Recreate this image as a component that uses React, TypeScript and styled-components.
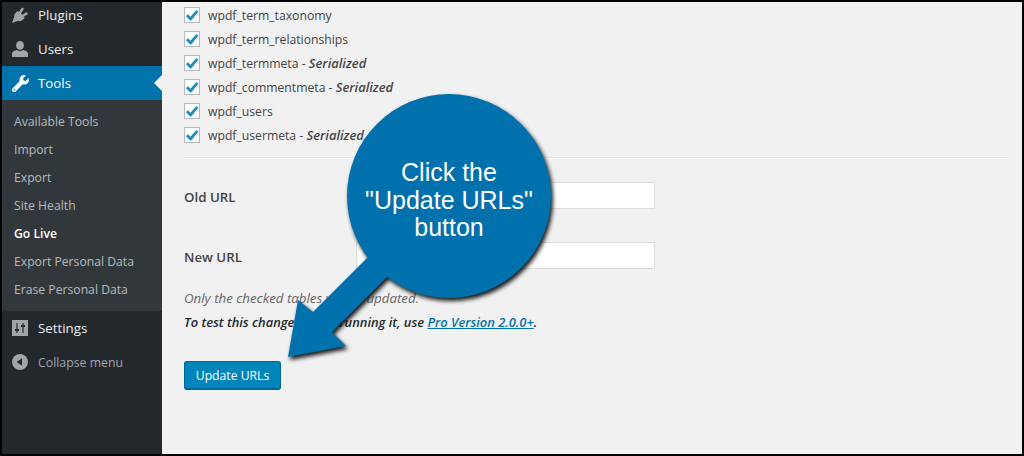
import React from "react";
import styled, { createGlobalStyle } from "styled-components";
import { FaWrench } from "react-icons/fa";

const GlobalStyle = createGlobalStyle`
  html, body {
    margin: 0;
    padding: 0;
    background: #000;
  }
  * {
    box-sizing: border-box;
  }
`;

const menuItems = ["Available Tools", "Import", "Export", "Site Health", "Go Live", "Export Personal Data", "Erase Personal Data"];

const tables = [
  { name: "wpdf_term_taxonomy", serialized: false },
  { name: "wpdf_term_relationships", serialized: false },
  { name: "wpdf_termmeta", serialized: true },
  { name: "wpdf_commentmeta", serialized: true },
  { name: "wpdf_users", serialized: false },
  { name: "wpdf_usermeta", serialized: true },
];

const PlugIcon = () => (
  <svg width="18" height="18" viewBox="0 0 18 18" fill="currentColor">
    <path d="M1 17 L3.2 11 C3 9.4 3.6 8 4.8 6.8 L6.6 5 L8 6 L10.8 1.4 L13 2.8 L10 7.6 L11.4 8.8 L15.6 6 L17 8 L12.6 10.8 L13.8 12 L11.2 14.2 C10 15.2 8.6 15.4 7.2 14.8 Z" />
  </svg>
);

const UserIcon = () => (
  <svg width="16" height="16" viewBox="0 0 16 16" fill="currentColor">
    <ellipse cx="8" cy="4.4" rx="3.9" ry="4.4" />
    <path d="M0 16 V12.4 C0 10.6 2.4 9.6 5 9 C6.8 10.2 9.2 10.2 11 9 C13.6 9.6 16 10.6 16 12.4 V16 Z" />
  </svg>
);

const SettingsIcon = () => (
  <svg width="16" height="16" viewBox="0 0 16 16">
    <rect width="16" height="16" fill="currentColor" />
    <path d="M5 3v10M11 3v10" stroke="#23282d" strokeWidth="1.2" />
    <path d="M3 10h4M9 6h4" stroke="#23282d" strokeWidth="2" />
  </svg>
);

const CollapseIcon = () => (
  <svg width="16" height="16" viewBox="0 0 16 16">
    <circle cx="8" cy="8" r="8" fill="currentColor" />
    <path d="M10 4.2v7.6L4.6 8z" fill="#23282d" />
  </svg>
);

const CheckIcon = () => (
  <svg width="14" height="14" viewBox="0 0 14 14">
    <path d="M2 7.2 L5.6 11 L12.4 2.8" fill="none" stroke="#1e8cbe" strokeWidth="2.8" />
  </svg>
);

const App = () => {
  return (
    <Frame>
      <GlobalStyle />
      <Sidebar>
        <Menu>
          <MenuRow>
            <MenuIcon><PlugIcon /></MenuIcon>
            Plugins
          </MenuRow>
          <MenuRow>
            <MenuIcon><UserIcon /></MenuIcon>
            Users
          </MenuRow>
          <MenuRow $active>
            <MenuIcon $active><FaWrench size={17} /></MenuIcon>
            Tools
          </MenuRow>
          <SubMenu>
            {menuItems.map((item) => (
              <SubItem key={item} $current={item === "Go Live"}>
                {item}
              </SubItem>
            ))}
          </SubMenu>
          <MenuRow>
            <MenuIcon><SettingsIcon /></MenuIcon>
            Settings
          </MenuRow>
          <MenuRow $muted>
            <MenuIcon><CollapseIcon /></MenuIcon>
            Collapse menu
          </MenuRow>
        </Menu>
      </Sidebar>

      <Main>
        <TableList>
          {tables.map((table) => (
            <TableRow key={table.name}>
              <CheckBox><CheckIcon /></CheckBox>
              <span>{table.name}</span>
              {table.serialized && (
                <span>
                  {" "}- <Serialized>Serialized</Serialized>
                </span>
              )}
            </TableRow>
          ))}
        </TableList>
        <Divider />
        <FieldRow>
          <FieldLabel>Old URL</FieldLabel>
          <TextBox />
        </FieldRow>
        <FieldRow>
          <FieldLabel>New URL</FieldLabel>
          <TextBox />
        </FieldRow>
        <Hint>Only the checked tables will be updated.</Hint>
        <Note>
          To test this change before running it, use <ProLink>Pro Version 2.0.0+</ProLink>.
        </Note>
        <UpdateButton>Update URLs</UpdateButton>
      </Main>

      <CalloutShape viewBox="0 0 1024 456">
        <g>
          <circle cx="449" cy="196" r="102" fill="#0071ac" />
          <polygon points="368,257 313,312 298,300 288,357 346,346 332,332 388,276" fill="#0071ac" />
        </g>
      </CalloutShape>
      <CalloutText>
        Click the
        <br />
        "Update URLs"
        <br />
        button
      </CalloutText>
    </Frame>
  );
};

export default App;

const Frame = styled.div`
  position: relative;
  display: flex;
  width: 1024px;
  height: 456px;
  border: 2px solid #000;
  overflow: hidden;
  background: #f1f1f1;
  font-family: "Open Sans", sans-serif;
  font-size: 12.2px;
  color: #444;
`;

const Sidebar = styled.aside`
  flex: 0 0 160px;
  background: #23282d;
`;

const Menu = styled.nav`
  margin-top: -4px;
`;

const MenuRow = styled.div<{ $active?: boolean; $muted?: boolean }>`
  position: relative;
  display: flex;
  align-items: center;
  height: 34px;
  background: ${(p) => (p.$active ? "#0073aa" : "transparent")};
  color: ${(p) => (p.$active ? "#fff" : p.$muted ? "#a0a5aa" : "#eee")};
  font-size: ${(p) => (p.$muted ? "12.3px" : "13.3px")};

  &::after {
    content: "";
    display: ${(p) => (p.$active ? "block" : "none")};
    position: absolute;
    right: 0;
    top: 9px;
    border: 8px solid transparent;
    border-right-color: #f1f1f1;
    border-left-width: 0;
  }
`;

const MenuIcon = styled.span<{ $active?: boolean }>`
  display: flex;
  align-items: center;
  justify-content: center;
  width: 36px;
  color: ${(p) => (p.$active ? "#fff" : "#a0a5aa")};
`;

const SubMenu = styled.div`
  padding: 7px 0 8px;
  background: #32373c;
`;

const SubItem = styled.div<{ $current?: boolean }>`
  height: 28px;
  line-height: 30px;
  padding-left: 12px;
  font-size: 12.2px;
  color: ${(p) => (p.$current ? "#fff" : "rgba(240, 245, 250, 0.7)")};
  font-weight: ${(p) => (p.$current ? 600 : 400)};
`;

const Main = styled.main`
  flex: 1;
  padding: 0 14px 0 22px;
`;

const TableList = styled.div`
  padding-top: 1px;
`;

const TableRow = styled.div`
  display: flex;
  align-items: center;
  height: 24px;
  white-space: pre;
`;

const CheckBox = styled.span`
  display: flex;
  align-items: center;
  justify-content: center;
  width: 16px;
  height: 16px;
  margin-right: 8px;
  background: #fff;
  border: 1px solid #b4b9be;
`;

const Serialized = styled.em`
  font-size: 13px;
  font-weight: 600;
`;

const Divider = styled.hr`
  margin: 10px 0 6px;
  border: 0;
  border-top: 1px solid #e4e4e4;
  border-bottom: 1px solid #fafafa;
`;

const FieldRow = styled.div`
  display: flex;
  align-items: center;
  height: 60px;
  font-size: 13.3px;
  font-weight: 600;
`;

const FieldLabel = styled.label`
  flex: 0 0 172px;
  padding-top: 4px;
`;

const TextBox = styled.div`
  width: 299px;
  height: 27px;
  background: #fff;
  border: 1px solid #ddd;
`;

const Hint = styled.p`
  margin: 3px 0 0;
  line-height: 20px;
  font-size: 13.3px;
  font-style: italic;
  color: #666;
`;

const Note = styled.p`
  margin: 4px 0 0;
  line-height: 20px;
  font-size: 12.9px;
  font-style: italic;
  font-weight: 600;
  color: #23282d;
`;

const ProLink = styled.a`
  color: #0073aa;
  text-decoration: underline;
`;

const UpdateButton = styled.button`
  display: block;
  width: 97px;
  height: 29px;
  margin-top: 29px;
  padding: 0;
  background: #0085ba;
  border: 1px solid #006799;
  border-bottom-width: 2px;
  border-radius: 3px;
  color: #fff;
  font-family: inherit;
  font-size: 12.2px;
`;

const CalloutShape = styled.svg`
  position: absolute;
  left: -2px;
  top: -2px;
  width: 1024px;
  height: 456px;
  filter: drop-shadow(2px 3px 2px rgba(0, 0, 0, 0.9));
  pointer-events: none;
`;

const CalloutText = styled.div`
  position: absolute;
  left: 347px;
  top: 157px;
  width: 200px;
  text-align: center;
  font-family: "Liberation Sans", Arial, sans-serif;
  font-size: 25px;
  line-height: 27.5px;
  color: #fff;
`;
